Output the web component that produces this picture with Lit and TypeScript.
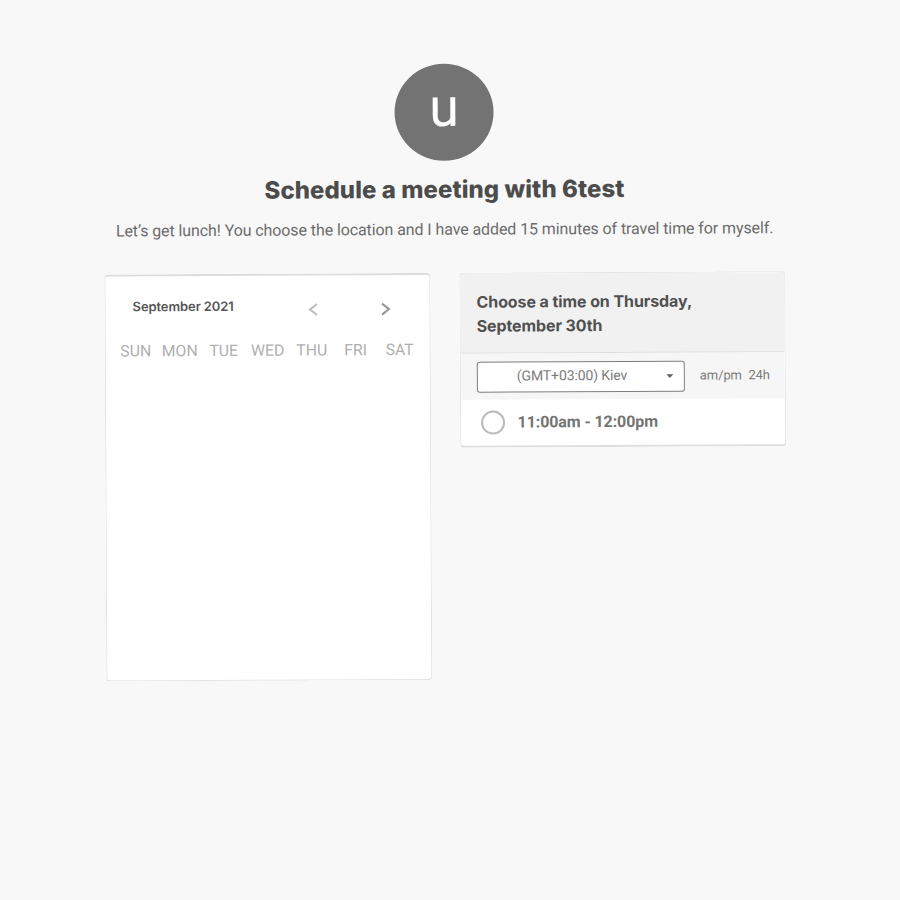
import { LitElement, html, css } from "lit";
import { customElement } from "lit/decorators.js";

const DAYS = ["SUN", "MON", "TUE", "WED", "THU", "FRI", "SAT"];

@customElement("month-calendar")
class MonthCalendar extends LitElement {
  static styles = css`
    :host {
      display: block;
      box-sizing: border-box;
      width: 326px;
      height: 407px;
      background: #fff;
      border: 1px solid #e3e3e3;
      border-top: 2px solid #dcdcdc;
      border-radius: 4px;
    }
    .bar {
      display: flex;
      align-items: center;
      padding: 22px 0 0 27px;
      height: 24px;
    }
    .month {
      width: 174.5px;
      font: 600 13px/20px Inter, sans-serif;
      letter-spacing: -0.1px;
      color: #565656;
      margin-top: -8px;
    }
    .arrow { display: block; width: 12px; height: 16px; fill: none; stroke-width: 2; }
    .prev { stroke: #bdbdbd; }
    .next { stroke: #969696; margin-left: 60px; }
    .days {
      display: grid;
      grid-template-columns: repeat(7, 44px);
      margin: 19px 0 0 8px;
      font: 400 15.8px/20px Roboto, sans-serif;
      color: #b0b0b0;
      text-align: center;
    }
  `;
  render() {
    return html`
      <div class="bar">
        <span class="month">September 2021</span>
        <svg class="arrow prev" viewBox="0 0 12 16"><path d="M9.5 2.5 2.5 8l7 5.5" /></svg>
        <svg class="arrow next" viewBox="0 0 12 16"><path d="m2.5 2.5 7 5.5-7 5.5" /></svg>
      </div>
      <div class="days">${DAYS.map((d) => html`<span>${d}</span>`)}</div>
    `;
  }
}

@customElement("time-picker")
class TimePicker extends LitElement {
  static styles = css`
    :host {
      display: block;
      box-sizing: border-box;
      width: 326px;
      height: 175px;
      background: #fff;
      border: 1px solid #e4e4e4;
      border-bottom: 2px solid #dedede;
      border-radius: 4px;
      overflow: hidden;
    }
    .head {
      box-sizing: border-box;
      height: 80px;
      padding: 16px 16px 0;
      background: #f1f1f1;
      border-bottom: 1px solid #dedede;
      font: 700 16px/24px Inter, sans-serif;
      letter-spacing: -0.09px;
      color: #505050;
    }
    .zone {
      display: flex;
      align-items: center;
      height: 46px;
      padding-left: 15.5px;
      background: #f6f6f6;
      font: 400 13px/18px Roboto, sans-serif;
      letter-spacing: -0.1px;
      color: #7c7c7c;
    }
    .select {
      box-sizing: border-box;
      display: flex;
      align-items: center;
      width: 208px;
      height: 31px;
      margin-top: 1px;
      padding: 0 10px 0 39.5px;
      background: #fff;
      border: 1px solid #7e7e7e;
      border-radius: 3px;
      font-size: 14px;
      letter-spacing: -0.12px;
    }
    .name { flex: 1; margin-top: -2px; }
    .caret { display: block; width: 8px; height: 5px; fill: #606060; }
    .fmt { margin: 1px 0 0 15.5px; }
    .fmt + .fmt { margin-left: 6.5px; }
    .slot { display: flex; align-items: center; height: 46px; padding-left: 19.5px; }
    .radio {
      box-sizing: border-box;
      width: 24px;
      height: 24px;
      border: 2px solid #bababa;
      border-radius: 50%;
    }
    .range {
      margin-left: 13px;
      font: 700 16px/20px Roboto, sans-serif;
      letter-spacing: -0.1px;
      color: #747474;
    }
  `;
  render() {
    return html`
      <div class="head">Choose a time on Thursday,<br />September 30th</div>
      <div class="zone">
        <div class="select">
          <span class="name">(GMT+03:00) Kiev</span>
          <svg class="caret" viewBox="0 0 8 5"><path d="M.5.5h7L4 4.3z" /></svg>
        </div>
        <span class="fmt">am/pm</span><span class="fmt">24h</span>
      </div>
      <div class="slot"><span class="radio"></span><span class="range">11:00am - 12:00pm</span></div>
    `;
  }
}

@customElement("app-root")
class AppRoot extends LitElement {
  static styles = css`
    :host { display: block; height: 900px; overflow: hidden; background: #f8f8f8; }
    .page {
      width: 681px;
      padding: 66px 0 0 103px;
      transform: rotate(-0.28deg);
      transform-origin: 0 0;
    }
    .intro { display: flex; flex-direction: column; align-items: center; }
    .avatar {
      box-sizing: border-box;
      display: flex;
      align-items: center;
      justify-content: center;
      width: 99px;
      height: 97px;
      padding-bottom: 10px;
      border-radius: 50%;
      background: #737373;
      color: #fff;
      font: 400 54px/60px Roboto, sans-serif;
    }
    h1 {
      margin: 13px 0 0;
      font: 800 24px/32px Inter, sans-serif;
      letter-spacing: 0.05px;
      color: #4c4c4c;
      white-space: nowrap;
    }
    p {
      margin: 12px 0 0;
      font: 400 16px/24px Roboto, sans-serif;
      letter-spacing: -0.095px;
      color: #6c6c6c;
      white-space: nowrap;
    }
    .columns { display: flex; justify-content: space-between; align-items: flex-start; margin-top: 30.5px; }
  `;
  render() {
    return html`
      <div class="page">
        <div class="intro">
          <div class="avatar">u</div>
          <h1>Schedule a meeting with 6test</h1>
          <p>Let’s get lunch! You choose the location and I have added 15 minutes of travel time for myself.</p>
        </div>
        <div class="columns">
          <month-calendar></month-calendar>
          <time-picker></time-picker>
        </div>
      </div>
    `;
  }
}
